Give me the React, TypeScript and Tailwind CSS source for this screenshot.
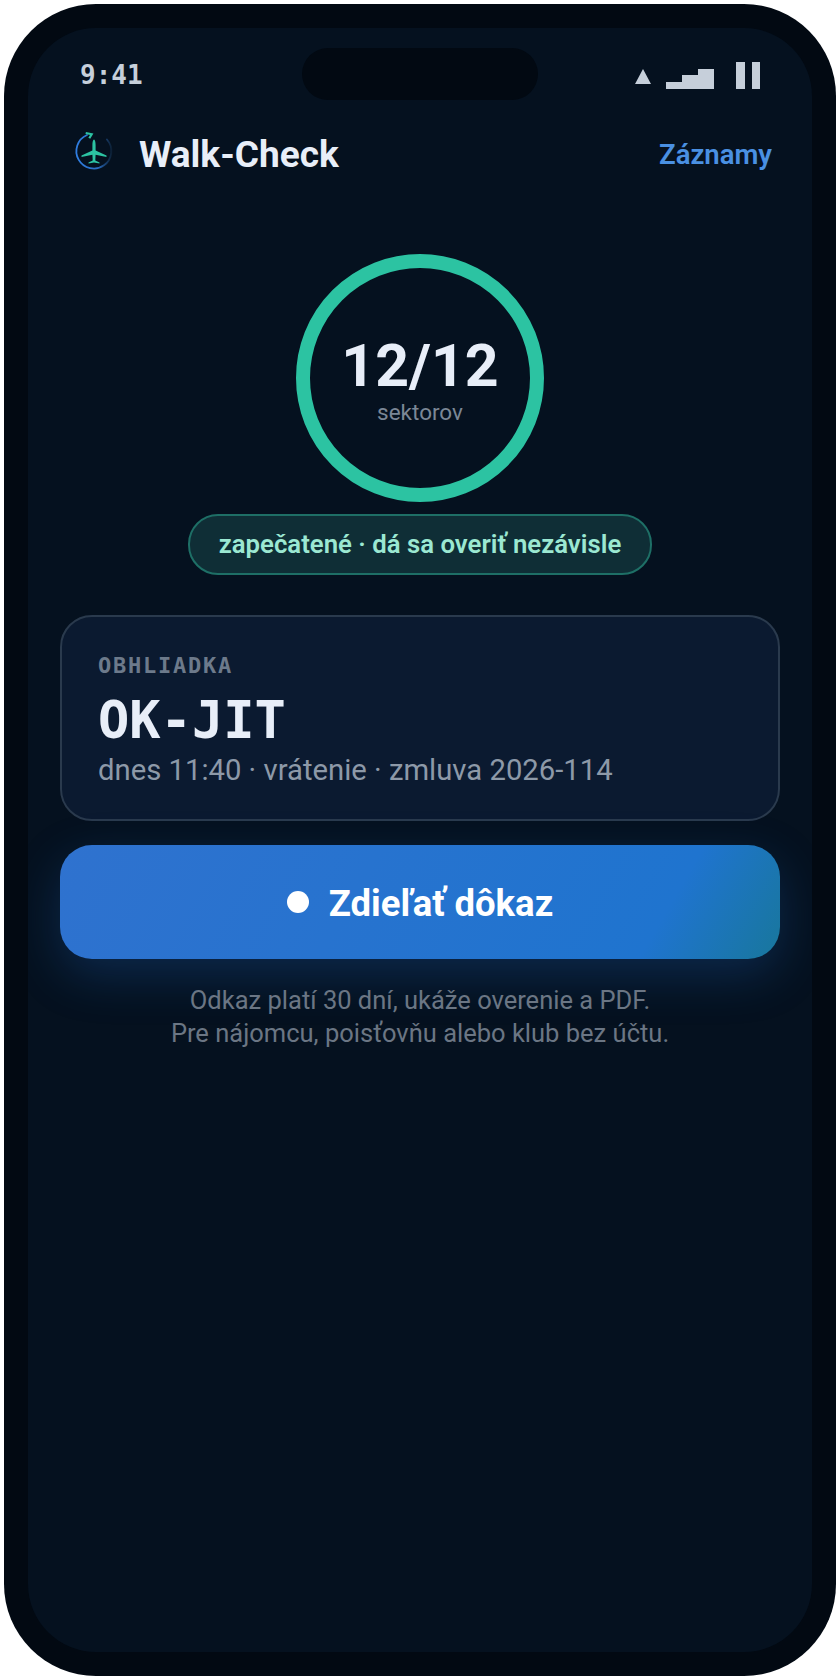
import * as React from 'react';

const sans = "font-['Roboto',sans-serif]";
const mono = "font-['DejaVu_Sans_Mono',monospace]";

function Logo() {
  return (
    <svg width="48" height="48" viewBox="0 0 48 48" fill="none">
      <defs>
        <linearGradient id="ringFade" x1="0" y1="0" x2="1" y2="0">
          <stop offset="0" stopColor="#2f7de0" />
          <stop offset="0.6" stopColor="#2a6fc4" />
          <stop offset="1" stopColor="#0c2036" />
        </linearGradient>
      </defs>
      <path d="M19 7 A17.5 17.5 0 1 0 39 11.5" stroke="url(#ringFade)" strokeWidth="1.8" strokeLinecap="round" />
      <path d="M17.7 5 L23.7 6.2 L21.3 10.3" stroke="#2cc3a2" strokeWidth="2.2" fill="none" />
      <path
        d="M26 11.5 C27 11.5 27.6 14 27.6 17 L27.6 22.5 L38.5 27.4 L38.5 29 L27.6 26.8 L27.3 32.5 L31.5 34.4 L31.5 35.4 L26 34.6 L20.5 35.4 L20.5 34.4 L24.7 32.5 L24.4 26.8 L13.5 29 L13.5 27.4 L24.4 22.5 L24.4 17 C24.4 14 25 11.5 26 11.5 Z"
        fill="#2cc3a2"
      />
    </svg>
  );
}

function StatusIcons() {
  return (
    <div className="flex items-end justify-end">
      <svg width="16" height="15" viewBox="0 0 16 15" className="mb-[5px]">
        <path d="M8 0 L16 15 L0 15 Z" fill="#c6cfda" />
      </svg>
      <div className="ml-[15px] flex items-end">
        <div className="h-[7px] w-4 bg-[#c6cfda]" />
        <div className="h-[14px] w-4 bg-[#c6cfda]" />
        <div className="h-5 w-4 bg-[#c6cfda]" />
      </div>
      <div className="ml-[22px] flex items-end gap-[7px]">
        <div className="h-[27px] w-[9px] bg-[#c6cfda]" />
        <div className="h-[27px] w-[8px] bg-[#c6cfda]" />
      </div>
    </div>
  );
}

export default function App() {
  return (
    <div className={`h-[1680px] w-[840px] bg-white p-1 ${sans}`}>
      <div className="h-full w-full rounded-[92px] bg-[#020912] p-6">
        <div className="flex h-full flex-col overflow-hidden rounded-[68px] bg-[#05111f]">
          {/* status bar */}
          <div className="mt-5 grid h-[52px] shrink-0 grid-cols-[1fr_236px_1fr] items-center px-[52px]">
            <span className={`pt-[2px] text-[26px] font-bold text-[#c6cfda] ${mono}`}>9:41</span>
            <div className="h-[52px] rounded-[26px] bg-[#020912]" />
            <div className="pt-[3px]">
              <StatusIcons />
            </div>
          </div>

          {/* header */}
          <div className="mt-[28px] flex h-12 items-center justify-between pl-10 pr-[40px]">
            <div className="flex items-center gap-[23px]">
              <Logo />
              <span className="pt-[6px] text-[37px] font-bold text-[#e8eef8]">Walk-Check</span>
            </div>
            <span className="pt-[6px] text-[27.5px] font-semibold text-[#4a90e2]">Záznamy</span>
          </div>

          {/* progress ring */}
          <div className="mt-[78px] flex flex-col items-center">
            <div className="flex h-[248px] w-[248px] flex-col items-center justify-center rounded-full border-[14px] border-[#2cc3a2] pt-2">
              <span className="text-[59px] leading-[64px] font-bold text-[#e8eef8]">12/12</span>
              <span className="mb-1 text-[22.5px] leading-[28px] text-[#7b8796]">sektorov</span>
            </div>
            <div className="mt-3 flex h-[61px] w-[464px] items-center justify-center rounded-[30px] border-2 border-[#1e6f66] bg-[#0f2e36]">
              <span className="text-[25.75px] font-semibold text-[#9be8d2]">zapečatené · dá sa overiť nezávisle</span>
            </div>
          </div>

          {/* card */}
          <div className="mx-8 mt-10 flex h-[206px] flex-col rounded-[32px] border-2 border-[#2a3a4d] bg-[#0b1a30] px-9 pt-[35px]">
            <span className={`text-[22px] leading-[28px] font-bold tracking-[1.76px] text-[#6d7a8b] ${mono}`}>OBHLIADKA</span>
            <span className={`mt-[10px] text-[52px] leading-[60px] font-bold text-[#e8eef8] ${mono}`}>OK-JIT</span>
            <span className="mt-[2px] text-[29.25px] leading-[36px] text-[#8d99a8]">dnes 11:40 · vrátenie · zmluva 2026-114</span>
          </div>

          {/* share button */}
          <div className="mx-8 mt-6 flex h-[114px] items-center justify-center gap-5 rounded-[32px] bg-[linear-gradient(120deg,#2f72cf_0%,#1f74cf_82%,#18779c_100%)] shadow-[0_16px_48px_rgba(30,110,210,0.25)]">
            <div className="h-[22px] w-[22px] rounded-full bg-white" />
            <span className="pt-1 text-[36.5px] font-bold text-white">Zdieľať dôkaz</span>
          </div>

          {/* note */}
          <div className="mt-[25px] text-center text-[25.5px] leading-[33px] text-[#6b7684]">
            <p>Odkaz platí 30 dní, ukáže overenie a PDF.</p>
            <p>Pre nájomcu, poisťovňu alebo klub bez účtu.</p>
          </div>
        </div>
      </div>
    </div>
  );
}
